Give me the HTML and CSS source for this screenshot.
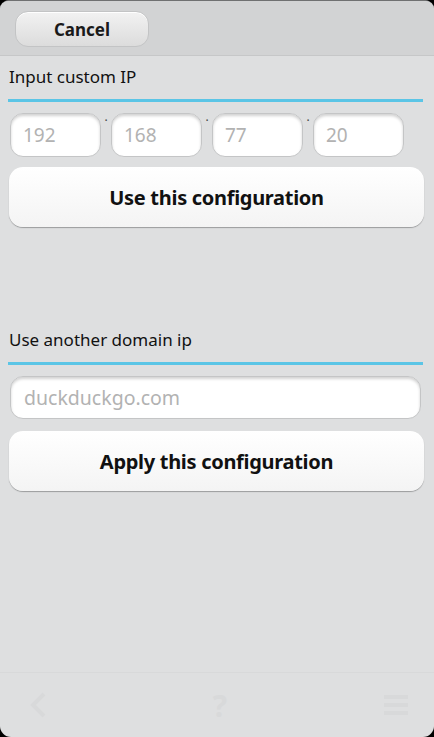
FILE: index.html
```html
<!DOCTYPE html>
<html>
<head>
    <title>Network configuration</title>
    <link rel="stylesheet" href="styles.css">
</head>
<body>
    <div class="screen">
        <!-- Top bar with cancel -->
        <div class="header">
            <button class="cancel-btn">Cancel</button>
        </div>

        <div class="content">
            <div class="section">
                <div class="section-title">Input custom IP</div>
                <div class="ip-row">
                    <input class="ip-field" type="text" placeholder="192">
                    <span class="dot">.</span>
                    <input class="ip-field" type="text" placeholder="168">
                    <span class="dot">.</span>
                    <input class="ip-field" type="text" placeholder="77">
                    <span class="dot">.</span>
                    <input class="ip-field" type="text" placeholder="20">
                </div>
                <button class="big-btn">Use this configuration</button>
            </div>

            <div class="section second">
                <div class="section-title">Use another domain ip</div>
                <input class="domain-field" type="text" placeholder="duckduckgo.com">
                <button class="big-btn">Apply this configuration</button>
            </div>
        </div>

        <!-- Toolbar (disabled look) -->
        <div class="toolbar">
            <svg width="22" height="28" viewBox="0 0 22 28">
                <path d="M16 3 L5 14 L16 25" fill="none" stroke="#d8d9da" stroke-width="4"/>
            </svg>
            <span class="help">?</span>
            <svg width="28" height="24" viewBox="0 0 28 24">
                <rect x="2" y="2" width="24" height="4" fill="#d8d9da"/>
                <rect x="2" y="10" width="24" height="4" fill="#d8d9da"/>
                <rect x="2" y="18" width="24" height="4" fill="#d8d9da"/>
            </svg>
        </div>
    </div>
</body>
</html>
```

FILE: styles.css
```css
html, body {
    margin: 0;
    padding: 0;
    background-color: #000;
    height: 100%;
}

body {
    font-family: 'Noto Sans', 'Open Sans', sans-serif;
    overflow: hidden;
}

.screen {
    width: 434px;
    height: 737px;
    display: flex;
    flex-direction: column;
    background-color: #dedfe0;
    border-radius: 9px 9px 11px 11px;
    overflow: hidden;
    box-sizing: border-box;
    border-top: 1px solid #6f7071;
}

.header {
    height: 55px;
    flex-shrink: 0;
    background-color: #d2d3d4;
    border-bottom: 1px solid #c6c7c8;
    box-sizing: border-box;
    padding: 10px 0 0 15px;
}

.cancel-btn {
    width: 134px;
    height: 36px;
    border-radius: 13px;
    border: 1px solid #c3c4c5;
    background: linear-gradient(#f2f2f2, #dcdcdc);
    box-shadow: inset 0 1px 0 #fff;
    font-family: 'Noto Sans', sans-serif;
    font-weight: bold;
    font-size: 17px;
    color: #1a1a1a;
    padding: 0;
}

.content {
    flex: 1;
    padding: 0 11px 0 8px;
}

.section-title {
    font-size: 17px;
    color: #111;
    padding: 9px 0 0 1px;
    box-sizing: border-box;
    height: 46px;
    border-bottom: 3px solid #5bc5e6;
}

.ip-row {
    display: flex;
    align-items: flex-start;
    margin-top: 11px;
    padding-left: 2px;
}

.dot {
    width: 10px;
    font-size: 12px;
    line-height: 8px;
    text-align: center;
    color: #444;
}

.ip-field,
.domain-field {
    height: 44px;
    box-sizing: border-box;
    border: 1px solid #c4c5c6;
    border-radius: 13px;
    background-color: #fff;
    box-shadow: inset 0 2px 3px rgba(0,0,0,0.18);
    font-family: 'Noto Sans', sans-serif;
    font-size: 19px;
    padding: 0 12px;
    color: #333;
    outline: none;
}

.ip-field {
    width: 91px;
}

.ip-field::placeholder,
.domain-field::placeholder {
    color: #b2b2b2;
}

.big-btn {
    display: block;
    width: 415px;
    height: 60px;
    margin: 10px 0 0 1px;
    border: none;
    border-radius: 14px;
    background: linear-gradient(#ffffff, #f4f4f4);
    box-shadow: 0 1px 1px #9b9c9d;
    font-family: 'Noto Sans', sans-serif;
    font-weight: bold;
    font-size: 20px;
    letter-spacing: -0.3px;
    color: #111;
}

.second {
    margin-top: 92px;
}

.domain-field {
    display: block;
    width: 411px;
    height: 43px;
    margin: 11px 0 0 2px;
    padding-left: 13px;
    font-size: 19.5px;
}

.second .big-btn {
    margin-top: 12px;
}

.toolbar {
    height: 64px;
    flex-shrink: 0;
    border-top: 1px solid #d8d9da;
    display: flex;
    justify-content: space-between;
    align-items: center;
    padding: 0 24px 0 28px;
}

.help {
    font-size: 30px;
    font-weight: bold;
    color: #d8d9da;
    margin-left: 8px;
}
```
